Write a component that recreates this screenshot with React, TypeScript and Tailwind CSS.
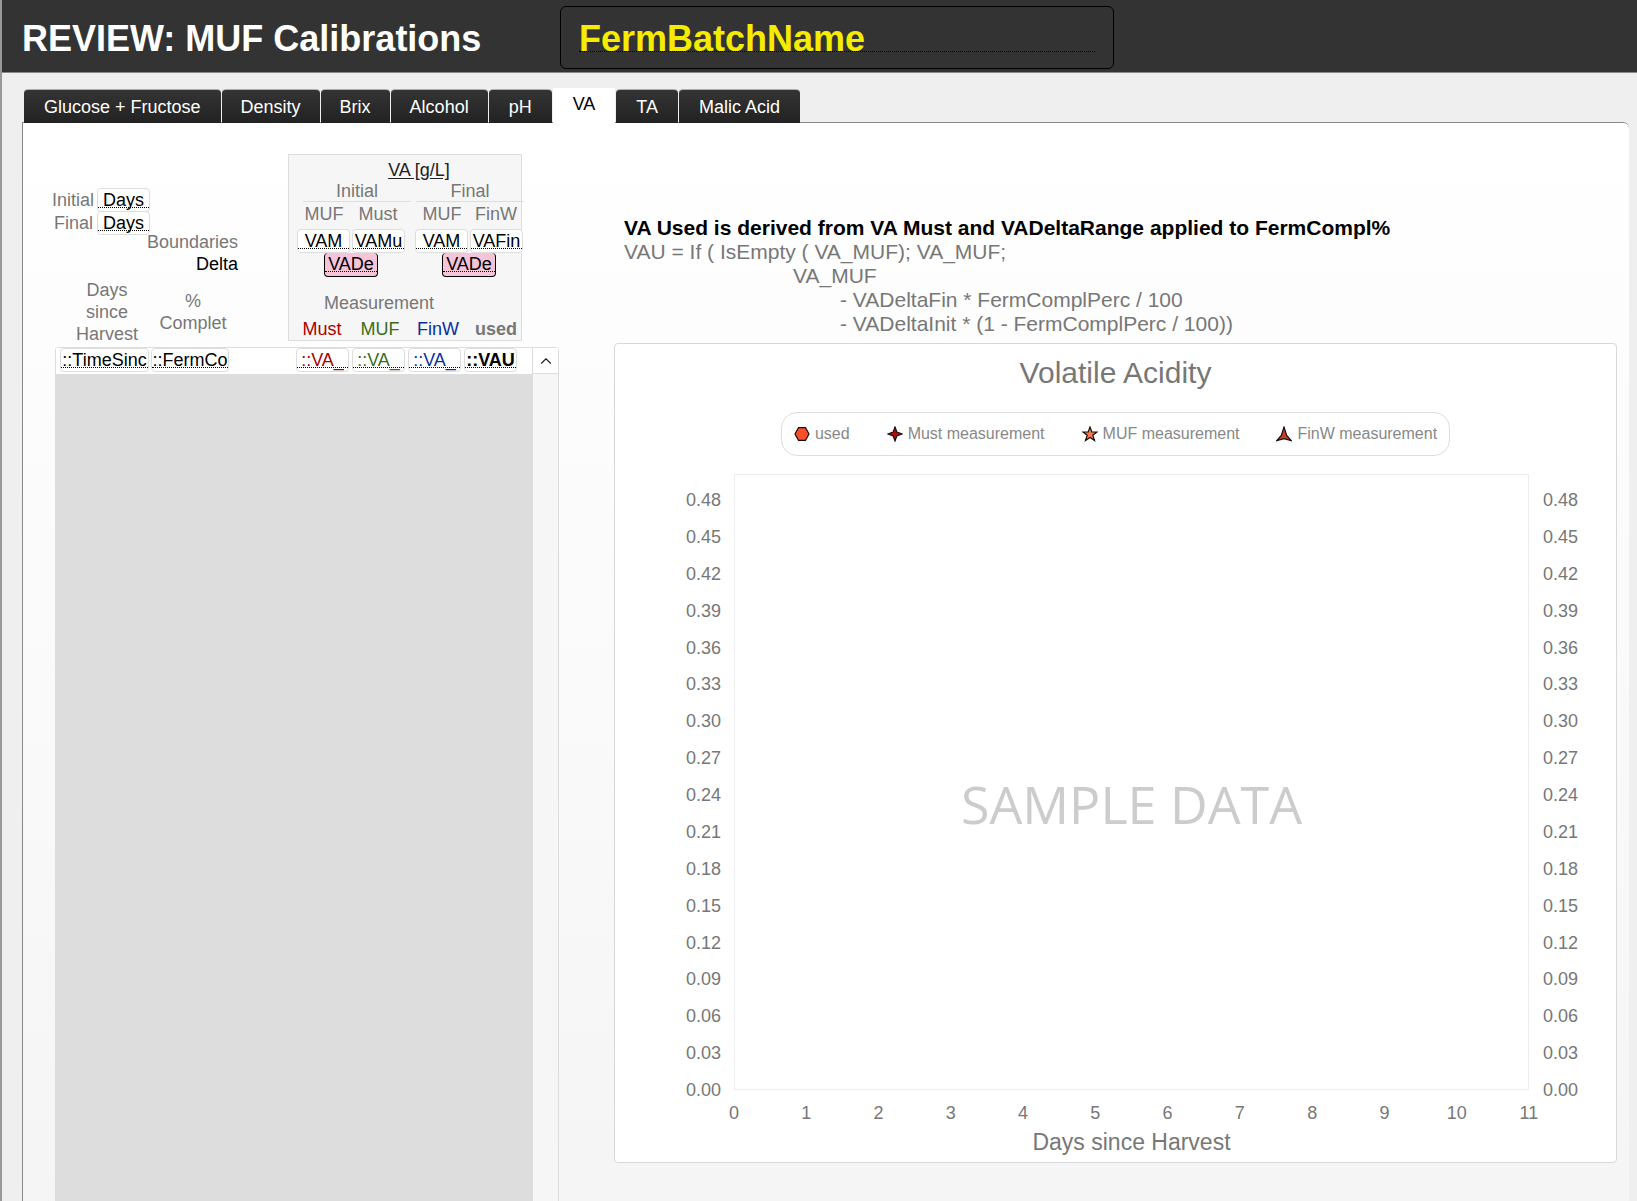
import React, { useState } from 'react';
import { ChevronUp } from 'lucide-react';

const TABS = [
  { name: 'Glucose + Fructose', padding: 'px-5' },
  { name: 'Density', padding: 'px-[19px]' },
  { name: 'Brix', padding: 'px-[19px]' },
  { name: 'Alcohol', padding: 'px-[19px]' },
  { name: 'pH', padding: 'px-5' },
  { name: 'VA', padding: 'px-5' },
  { name: 'TA', padding: 'px-5' },
  { name: 'Malic Acid', padding: 'px-5' },
];

const Y_TICKS = Array.from({ length: 17 }, (_, i) => ((16 - i) * 0.03).toFixed(2));
const X_TICKS = Array.from({ length: 12 }, (_, i) => i);

interface FieldProps {
  label: string;
  value: string;
  className?: string;
  inputClassName?: string;
}

const Field: React.FC<FieldProps> = ({ label, value, className = '', inputClassName = 'text-black' }) => (
  <div className={`relative h-6 shrink-0 rounded border border-[#dddddd] bg-white ${className}`}>
    <input
      aria-label={label}
      defaultValue={value}
      className={`block h-full w-full bg-transparent text-center text-lg leading-5 outline-none ${inputClassName}`}
    />
    <div className="pointer-events-none absolute inset-x-0 bottom-[3px] border-b border-dotted border-black" />
  </div>
);

const DeltaField: React.FC<{ label: string }> = ({ label }) => (
  <div className="relative h-6 w-[54px] rounded border border-t-0 border-black bg-[#f5c4d8]">
    <input
      aria-label={label}
      defaultValue="VADe"
      className="block h-full w-full bg-transparent text-center text-lg leading-5 text-black outline-none"
    />
    <div className="pointer-events-none absolute inset-x-0 bottom-1 border-b border-dotted border-black" />
  </div>
);

interface BoundaryGroupProps {
  title: string;
  columns: string[];
  values: string[];
}

const BoundaryGroup: React.FC<BoundaryGroupProps> = ({ title, columns, values }) => (
  <div className="flex w-[108px] shrink-0 flex-col items-center">
    <div className="grid w-full grid-cols-2 text-center">
      {columns.map((c) => (
        <span key={c}>{c}</span>
      ))}
    </div>
    <div className="mt-1 flex gap-0.5">
      {values.map((v, i) => (
        <Field key={v} label={`${title} ${columns[i]}`} value={v} className="w-[53px]" />
      ))}
    </div>
    <DeltaField label={`${title} delta`} />
  </div>
);

const YAxis: React.FC<{ side: 'left' | 'right' }> = ({ side }) => (
  <div
    className={`flex w-[35px] shrink-0 flex-col justify-between pt-[18px] leading-4 font-medium ${
      side === 'left' ? 'mr-[13px] text-right' : 'ml-[14px] text-left'
    }`}
  >
    {Y_TICKS.map((t) => (
      <span key={t}>{t}</span>
    ))}
  </div>
);

const LEGEND = [
  {
    name: 'used',
    shape: <path d="M4.500 1.700h7L15 8l-3.500 6.300h-7L1 8z" fill="#fb4f2a" />,
  },
  {
    name: 'Must measurement',
    shape: <path d="M8 1l1.900 5.100L15 8l-5.100 1.900L8 15l-1.900-5.100L1 8l5.100-1.900z" fill="#b40c0c" />,
  },
  {
    name: 'MUF measurement',
    shape: <path d="M8 1l1.800 5H15l-4.200 3.300L12.500 14.500 8 11.400 3.500 14.500l1.700-5.200L1 6h5.200z" fill="#fb7650" />,
  },
  {
    name: 'FinW measurement',
    shape: <path d="M8 1l2.700 8.500 4.600 5.200L8 12.600.7 14.700l4.600-5.200z" fill="#cc3a26" />,
  },
];

const ReviewHeader: React.FC = () => (
  <header className="flex h-[73px] shrink-0 items-center border-b border-[#888888] bg-[#333333] pt-[3px]">
    <h1 className="w-[558px] shrink-0 pt-[3px] pl-5 text-4xl font-bold text-white">REVIEW: MUF Calibrations</h1>
    <div className="relative flex h-[63px] w-[554px] items-center rounded-md border border-black px-[18px] pt-[3px]">
      <input
        aria-label="Batch name"
        defaultValue="FermBatchName"
        className="w-full bg-transparent text-4xl font-bold text-[#f5ec00] outline-none"
      />
      <div className="pointer-events-none absolute inset-x-[18px] bottom-4 border-b border-dotted border-black" />
    </div>
  </header>
);

const MeasurementTable: React.FC = () => (
  <section className="flex w-[507px] shrink-0 flex-col">
    <div className="flex justify-between pr-[37px]">
      <div className="w-[186px] pt-[34px] leading-[22px]">
        <div className="flex items-center">
          <span className="w-[41px] text-right">Initial</span>
          <Field label="Initial days" value="Days" className="ml-1 w-[53px]" />
        </div>
        <div className="-mt-px flex items-center">
          <span className="w-[41px] text-right">Final</span>
          <Field label="Final days" value="Days" className="ml-1 w-[53px]" />
        </div>
        <div className="-mt-1 text-right">Boundaries</div>
        <div className="text-right text-black">Delta</div>
        <div className="mt-1 flex items-center text-center">
          <span className="ml-5 w-[70px]">Days since Harvest</span>
          <span className="ml-4 w-[70px]">% Complet</span>
        </div>
      </div>

      <div className="flex h-[187px] w-[234px] flex-col border border-[#dddddd] bg-[#f6f6f6] leading-[22px]">
        <div className="mt-1 pl-7 text-center text-[#222222] underline underline-offset-2">VA [g/L]</div>
        <div className="flex gap-[5px] pl-3.5 text-center leading-5">
          <div className="w-[108px] shrink-0 border-b border-[#dddddd]">Initial</div>
          <div className="w-[108px] shrink-0 border-b border-[#dddddd]">Final</div>
        </div>
        <div className="mt-px flex gap-2.5 pl-2">
          <BoundaryGroup title="Initial" columns={['MUF', 'Must']} values={['VAM', 'VAMu']} />
          <BoundaryGroup title="Final" columns={['MUF', 'FinW']} values={['VAM', 'VAFin']} />
        </div>
        <div className="mt-auto pr-[52px] text-center">Measurement</div>
        <div className="-mr-1 mt-1 grid grid-cols-4 pl-1 text-center">
          <span className="text-[#aa0000]">Must</span>
          <span className="text-[#3b6d1c]">MUF</span>
          <span className="text-[#0a2fa0]">FinW</span>
          <span className="font-bold">used</span>
        </div>
      </div>
    </div>

    <div className="mt-0.5 ml-[3px] flex flex-1 rounded-t border border-b-0 border-[#dddddd]">
      <div className="flex flex-1 flex-col bg-[#dddddd]">
        <div className="flex h-[26px] justify-between bg-white pr-[15px] pl-1">
          <div className="flex gap-0.5">
            <Field label="Days since harvest" value="::TimeSinc" className="w-[89px]" />
            <Field label="% complete" value="::FermCo" className="w-[78px]" />
          </div>
          <div className="flex gap-[3px]">
            <Field label="Must" value="::VA_" className="w-[53px]" inputClassName="text-[#aa0000]" />
            <Field label="MUF" value="::VA_" className="w-[53px]" inputClassName="text-[#3b6d1c]" />
            <Field label="FinW" value="::VA_" className="w-[53px]" inputClassName="text-[#0a2fa0]" />
            <Field label="used" value="::VAU" className="w-[53px]" inputClassName="font-bold text-black" />
          </div>
        </div>
      </div>
      <div className="w-[26px] border-l border-[#dddddd] bg-[#f6f6f6]">
        <button
          aria-label="Scroll up"
          className="flex h-[26px] w-full items-center justify-center border-b border-[#dddddd] bg-white text-[#222222]"
        >
          <ChevronUp size={18} strokeWidth={1.5} />
        </button>
      </div>
    </div>
  </section>
);

const AcidityChart: React.FC = () => (
  <div className="mt-[7px] flex min-h-[600px] flex-1 flex-col items-center rounded border border-[#d8d8d8] bg-white pt-[11px]">
    <h2 className="text-3xl leading-9">Volatile Acidity</h2>
    <ul className="mt-[21px] flex h-11 items-center gap-[37px] rounded-2xl border border-[#dddddd] px-3 text-base text-[#888888]">
      {LEGEND.map((item) => (
        <li key={item.name} className="flex items-center gap-[5px]">
          <svg viewBox="0 0 16 16" className="h-4 w-4" stroke="#111111" strokeWidth="1.2">
            {item.shape}
          </svg>
          {item.name}
        </li>
      ))}
    </ul>
    <div className="mt-[18px] -mb-2 flex w-full flex-1 pr-[38px] pl-[71px]">
      <YAxis side="left" />
      <div className="mb-2 flex flex-1 items-center justify-center border border-[#eeeeee] pt-11 text-[52px] text-[#cccccc] font-['Open_Sans',sans-serif]">
        SAMPLE DATA
      </div>
      <YAxis side="right" />
    </div>
    <div className="mt-[15px] flex w-full justify-between pr-[87px] pl-[119px] leading-4 font-medium">
      {X_TICKS.map((t) => (
        <span key={t} className="flex w-0 justify-center">
          {t}
        </span>
      ))}
    </div>
    <div className="mt-[5px] mb-1 pl-8 text-[23px] leading-8">Days since Harvest</div>
  </div>
);

const App: React.FC = () => {
  const [active, setActive] = useState('VA');

  return (
    <div className="flex min-h-screen flex-col border-l-2 border-[#999999] bg-[#efefef] text-lg text-[#777777] font-['Liberation_Sans',Arial,sans-serif]">
      <ReviewHeader />

      <div role="tablist" className="relative -mb-px flex h-[50px] shrink-0 items-end gap-px pt-4 pl-[22px]">
        {TABS.map(({ name, padding }) => (
          <button
            key={name}
            role="tab"
            aria-selected={name === active}
            onClick={() => setActive(name)}
            className={`${padding} ${
              name === active
                ? 'h-[35px] bg-white pb-1 text-black'
                : 'h-[34px] rounded-t-sm border-t border-[#aab0ac] bg-linear-to-b from-[#343434] to-[#222222] text-white'
            }`}
          >
            {name}
          </button>
        ))}
      </div>

      <main className="mr-2 ml-5 flex flex-1 rounded-tr-md border-t border-l border-[#888888] bg-linear-to-b from-white to-[#f5f5f5] pt-[31px] pr-3 pl-[29px]">
        <MeasurementTable />

        <section className="ml-[55px] flex flex-1 flex-col pt-[62px] pb-[38px]">
          <div className="pl-[10px] text-[21px] leading-6">
            <p className="font-bold text-black">
              VA Used is derived from VA Must and VADeltaRange applied to FermCompl%
            </p>
            <p>VAU = If ( IsEmpty ( VA_MUF); VA_MUF;</p>
            <p className="pl-[169px]">VA_MUF</p>
            <p className="pl-[216px]">- VADeltaFin * FermComplPerc / 100</p>
            <p className="pl-[216px]">- VADeltaInit * (1 - FermComplPerc / 100))</p>
          </div>
          <AcidityChart />
        </section>
      </main>
    </div>
  );
};

export default App;
